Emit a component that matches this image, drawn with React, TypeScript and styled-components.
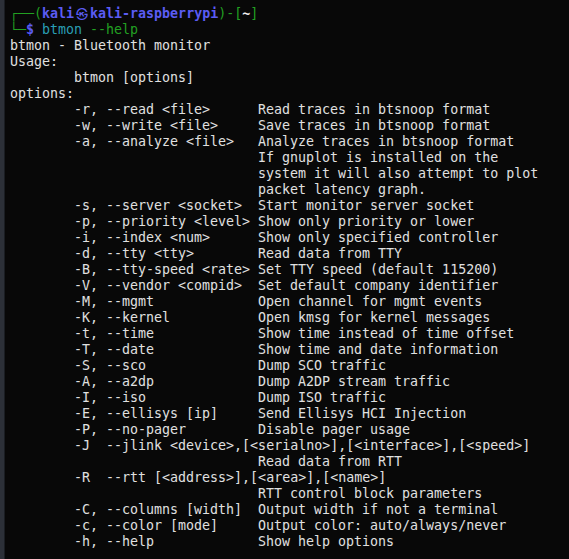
import React from "react";
import styled, { createGlobalStyle } from "styled-components";

const GlobalStyle = createGlobalStyle`
  html, body {
    margin: 0;
    padding: 0;
    background: #080808;
  }
  body {
    width: 569px;
    height: 559px;
    overflow: hidden;
  }
`;

const Window = styled.div`
  display: flex;
  width: 569px;
  height: 559px;
  background: #080808;
  overflow: hidden;
`;

const SideRail = styled.div`
  flex: 0 0 4px;
  background: #2c3038;
  border-right: 1px solid #1a1d22;
`;

const Terminal = styled.div`
  flex: 1;
  padding: 6px 0 0 5px;
  font-family: "DejaVu Sans Mono", "Liberation Mono", monospace;
  font-size: 13.3px;
  line-height: 16px;
  color: #e0e0e0;
  white-space: pre;
`;

const Line = styled.div<{ $indent?: number }>`
  height: 16px;
  padding-left: ${(p) => (p.$indent ?? 0) * 8}px;
`;

const Frame = styled.span`
  color: #22a022;
`;

const Host = styled.span`
  color: #5b5cf3;
  font-weight: bold;
`;

const WideGlyph = styled.span`
  display: inline-block;
  width: 16px;
  text-align: center;
  color: #5b5cf3;
  font-family: "Noto Sans CJK KR", "Noto Sans CJK JP", "DejaVu Sans", sans-serif;
  font-size: 12px;
  vertical-align: top;
`;

const Cwd = styled.span`
  color: #f2f2f2;
  font-weight: bold;
`;

const Dollar = styled.span`
  color: #5b5cf3;
  font-weight: bold;
`;

const Command = styled.span`
  color: #2a9fb5;
`;

const Arg = styled.span`
  color: #22a022;
`;

const OptionRow = styled.div`
  display: grid;
  grid-template-columns: 184px 1fr;
  height: 16px;
  padding-left: 64px;
`;

const Flag = styled.span<{ $wide?: boolean }>`
  grid-column: ${(p) => (p.$wide ? "1 / span 2" : "1")};
`;

const Desc = styled.span`
  grid-column: 2;
`;

type Opt = { flag: string; desc?: string; wide?: boolean };

const options: Opt[] = [
  { flag: "-r, --read <file>", desc: "Read traces in btsnoop format" },
  { flag: "-w, --write <file>", desc: "Save traces in btsnoop format" },
  { flag: "-a, --analyze <file>", desc: "Analyze traces in btsnoop format" },
  { flag: "", desc: "If gnuplot is installed on the" },
  { flag: "", desc: "system it will also attempt to plot" },
  { flag: "", desc: "packet latency graph." },
  { flag: "-s, --server <socket>", desc: "Start monitor server socket" },
  { flag: "-p, --priority <level>", desc: "Show only priority or lower" },
  { flag: "-i, --index <num>", desc: "Show only specified controller" },
  { flag: "-d, --tty <tty>", desc: "Read data from TTY" },
  { flag: "-B, --tty-speed <rate>", desc: "Set TTY speed (default 115200)" },
  { flag: "-V, --vendor <compid>", desc: "Set default company identifier" },
  { flag: "-M, --mgmt", desc: "Open channel for mgmt events" },
  { flag: "-K, --kernel", desc: "Open kmsg for kernel messages" },
  { flag: "-t, --time", desc: "Show time instead of time offset" },
  { flag: "-T, --date", desc: "Show time and date information" },
  { flag: "-S, --sco", desc: "Dump SCO traffic" },
  { flag: "-A, --a2dp", desc: "Dump A2DP stream traffic" },
  { flag: "-I, --iso", desc: "Dump ISO traffic" },
  { flag: "-E, --ellisys [ip]", desc: "Send Ellisys HCI Injection" },
  { flag: "-P, --no-pager", desc: "Disable pager usage" },
  { flag: "-J  --jlink <device>,[<serialno>],[<interface>],[<speed>]", wide: true },
  { flag: "", desc: "Read data from RTT" },
  { flag: "-R  --rtt [<address>],[<area>],[<name>]", wide: true },
  { flag: "", desc: "RTT control block parameters" },
  { flag: "-C, --columns [width]", desc: "Output width if not a terminal" },
  { flag: "-c, --color [mode]", desc: "Output color: auto/always/never" },
  { flag: "-h, --help", desc: "Show help options" },
];

export default function App() {
  return (
    <>
      <GlobalStyle />
      <Window>
        <SideRail />
        <Terminal>
          <Line>
            <Frame>┌──(</Frame>
            <Host>kali</Host>
            <WideGlyph>㉿</WideGlyph>
            <Host>kali-raspberrypi</Host>
            <Frame>)-[</Frame>
            <Cwd>~</Cwd>
            <Frame>]</Frame>
          </Line>
          <Line>
            <Frame>└─</Frame>
            <Dollar>$</Dollar> <Command>btmon</Command> <Arg>--help</Arg>
          </Line>
          <Line>btmon - Bluetooth monitor</Line>
          <Line>Usage:</Line>
          <Line $indent={8}>btmon [options]</Line>
          <Line>options:</Line>
          {options.map((o, i) => (
            <OptionRow key={i}>
              <Flag $wide={o.wide}>{o.flag}</Flag>
              {o.desc !== undefined && <Desc>{o.desc}</Desc>}
            </OptionRow>
          ))}
        </Terminal>
      </Window>
    </>
  );
}
